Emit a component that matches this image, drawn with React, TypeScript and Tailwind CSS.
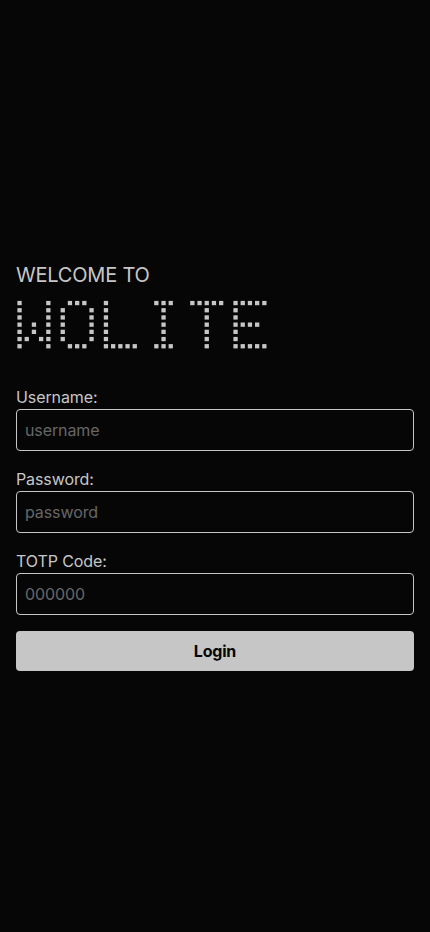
const GLYPHS: string[][] = [
  ['X...X', 'X...X', 'X...X', 'X.X.X', 'X.X.X', 'XX.XX', 'X...X'],
  ['.XXX.', 'X...X', 'X...X', 'X...X', 'X...X', 'X...X', '.XXX.'],
  ['X....', 'X....', 'X....', 'X....', 'X....', 'X....', 'XXXXX'],
  ['.XXX.', '..X..', '..X..', '..X..', '..X..', '..X..', '.XXX.'],
  ['XXXXX', '..X..', '..X..', '..X..', '..X..', '..X..', '..X..'],
  ['XXXXX', 'X....', 'X....', 'XXXX.', 'X....', 'X....', 'XXXXX'],
];

const PITCH = 7.2;
const DOT = 4.3;

function Logo() {
  return (
    <svg width="252" height="51" viewBox="0 0 252 51" fill="#c6c6c6" role="img" aria-label="WOLITE" className="block">
      {GLYPHS.flatMap((glyph, g) =>
        glyph.flatMap((row, y) =>
          [...row].map((cell, x) =>
            cell === 'X' ? (
              <rect
                key={`${g}-${x}-${y}`}
                x={(g * 6 + x) * PITCH + 1.4}
                y={y * PITCH + 1.9}
                width={DOT}
                height={DOT}
              />
            ) : null,
          ),
        ),
      )}
    </svg>
  );
}

function Field({ label, placeholder, type = 'text' }: { label: string; placeholder: string; type?: string }) {
  return (
    <label className="flex flex-col text-base tracking-[-0.1px]">
      {label}
      <input
        type={type}
        placeholder={placeholder}
        className="h-[42px] w-full rounded border border-[#c6c6c6] bg-transparent p-2 tracking-[-0.1px] placeholder:text-[#666666] outline-none"
      />
    </label>
  );
}

export default function App() {
  return (
    <main className="flex min-h-screen flex-col justify-center bg-[#060606] px-4 font-['Inter',sans-serif] text-[#c6c6c6]">
      <h1 className="mb-[10px] text-xl tracking-[-0.2px]">WELCOME TO</h1>
      <Logo />
      <form className="mt-[35px] flex flex-col gap-4" onSubmit={(e) => e.preventDefault()}>
        <Field label="Username:" placeholder="username" />
        <Field label="Password:" placeholder="password" type="password" />
        <Field label="TOTP Code:" placeholder="000000" />
        <button className="h-10 rounded bg-[#c6c6c6] font-bold tracking-[-0.2px] text-[#060606]">Login</button>
      </form>
    </main>
  );
}
